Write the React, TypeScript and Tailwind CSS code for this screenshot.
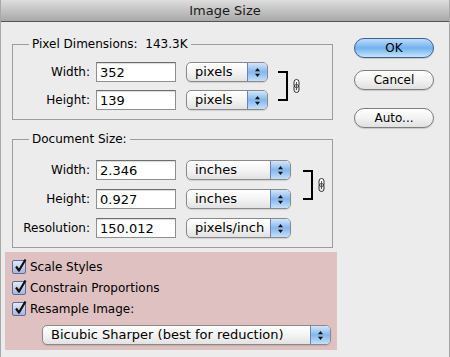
import type { ReactNode } from 'react';

const SelectArrows = () => (
  <svg width="7" height="11" viewBox="0 0 7 11">
    <path d="M3.5 1 L6 4.2 L1 4.2 Z" fill="#111" />
    <path d="M3.5 10 L6 6.8 L1 6.8 Z" fill="#111" />
  </svg>
);

const Popup = ({ value, width }: { value: string; width: string }) => (
  <div
    className={`flex h-[20px] ${width} overflow-hidden rounded-[5px] border border-[#8a8a8a] bg-gradient-to-b from-white via-[#f4f4f4] to-[#e2e2e2] shadow-[0_1px_1px_rgba(0,0,0,0.12)]`}
  >
    <span className="flex-1 truncate pl-[8px] text-[13px] leading-[18px]">{value}</span>
    <span className="flex w-[20px] items-center justify-center border-l border-[#6a83b5] bg-gradient-to-b from-[#d3e6fb] via-[#84b7ec] to-[#c4e0fb]">
      <SelectArrows />
    </span>
  </div>
);

const Field = ({ label, value }: { label: string; value: string }) => (
  <div className="flex items-center">
    <span className="w-[83px] pr-[6px] text-right">{label}</span>
    <div className="h-[20px] w-[80px] border border-[#8f8f8f] border-t-[#6e6e6e] bg-white pl-[3px] text-[13px] leading-[19px] shadow-[inset_0_1px_1px_rgba(0,0,0,0.15)]">
      {value}
    </div>
  </div>
);

const Row = ({ label, value, unit, unitWidth }: { label: string; value: string; unit: string; unitWidth: string }) => (
  <div className="flex items-center gap-[10px]">
    <Field label={label} value={value} />
    <Popup value={unit} width={unitWidth} />
  </div>
);

const Link = () => (
  <svg width="7" height="14" viewBox="0 0 7 14">
    <rect x="1" y="0.5" width="5" height="8" rx="2.5" fill="#fff" stroke="#333" />
    <rect x="1" y="5.5" width="5" height="8" rx="2.5" fill="none" stroke="#333" />
    <line x1="3.5" y1="3" x2="3.5" y2="11" stroke="#555" />
  </svg>
);

const Bracket = ({ gap }: { gap: string }) => (
  <div className={`flex items-center gap-[5px] ${gap}`}>
    <div className="h-[30px] w-[10px] border-y-2 border-r-2 border-black" />
    <Link />
  </div>
);

const Group = ({ title, children, className }: { title: ReactNode; children: ReactNode; className: string }) => (
  <fieldset className={`w-[321px] border border-[#9c9c9c] ${className}`}>
    <legend className="ml-[16px] px-[3px] leading-[16px]">{title}</legend>
    {children}
  </fieldset>
);

const Check = ({ label }: { label: string }) => (
  <div className="flex h-[21px] items-center gap-[4px] pl-[7px]">
    <span className="relative h-[14px] w-[14px] rounded-[2px] border border-[#5c6c97] bg-gradient-to-b from-[#e3e9f6] to-[#a8b7da]">
      <svg className="absolute -top-[3px] left-[1px]" width="13" height="15" viewBox="0 0 13 15">
        <path d="M2 8.5 L5 12.5 L11.5 1.5" fill="none" stroke="#111" strokeWidth="2.2" strokeLinejoin="round" />
      </svg>
    </span>
    <span>{label}</span>
  </div>
);

const Button = ({ label, primary }: { label: string; primary?: boolean }) => (
  <div
    className={`flex h-[20px] w-[80px] items-center justify-center rounded-full border ${
      primary
        ? 'border-[#3d5f9e] bg-gradient-to-b from-[#bcdcfb] via-[#72b1ee] to-[#c7e5fd]'
        : 'border-[#7d7d7d] bg-gradient-to-b from-white via-[#f2f2f2] to-[#e0e0e0]'
    } shadow-[0_1px_1px_rgba(0,0,0,0.15)]`}
  >
    {label}
  </div>
);

export default function App() {
  return (
    <div className="flex h-[357px] w-[450px] flex-col border-x border-[#a8a8a8] bg-[#ececec] font-['DejaVu_Sans',sans-serif] text-[12px] text-black">
      <div className="flex h-[22px] items-center justify-center border-b border-[#545454] bg-gradient-to-b from-[#dedede] to-[#a8a8a8] text-[13px] text-[#1a1a1a]">
        Image Size
      </div>

      <div className="flex">
        <div className="ml-[4px] w-[332px]">
          <Group
            className="ml-[7px] mt-[14px] pb-[9px] pt-[10px]"
            title={<span>Pixel Dimensions:&nbsp;&nbsp;143.3K</span>}
          >
            <div className="flex items-center">
              <div className="flex flex-col gap-[8px]">
                <Row label="Width:" value="352" unit="pixels" unitWidth="w-[82px]" />
                <Row label="Height:" value="139" unit="pixels" unitWidth="w-[82px]" />
              </div>
              <Bracket gap="ml-[10px]" />
            </div>
          </Group>

          <Group className="ml-[7px] mt-[11px] pb-[9px] pt-[13px]" title="Document Size:">
            <div className="flex flex-col gap-[9px]">
              <div className="flex items-center">
                <div className="flex flex-col gap-[9px]">
                  <Row label="Width:" value="2.346" unit="inches" unitWidth="w-[105px]" />
                  <Row label="Height:" value="0.927" unit="inches" unitWidth="w-[105px]" />
                </div>
                <Bracket gap="ml-[12px]" />
              </div>
              <Row label="Resolution:" value="150.012" unit="pixels/inch" unitWidth="w-[105px]" />
            </div>
          </Group>

          <div className="mt-[4px] h-[98px] bg-[#dfc1c1] pt-[4px]">
            <Check label="Scale Styles" />
            <Check label="Constrain Proportions" />
            <Check label="Resample Image:" />
            <div className="ml-[37px] mt-[6px]">
              <Popup value="Bicubic Sharper (best for reduction)" width="w-[289px]" />
            </div>
          </div>
        </div>

        <div className="ml-[17px] mt-[16px] flex flex-col">
          <Button label="OK" primary />
          <div className="mt-[12px]">
            <Button label="Cancel" />
          </div>
          <div className="mt-[18px]">
            <Button label="Auto..." />
          </div>
        </div>
      </div>
    </div>
  );
}
